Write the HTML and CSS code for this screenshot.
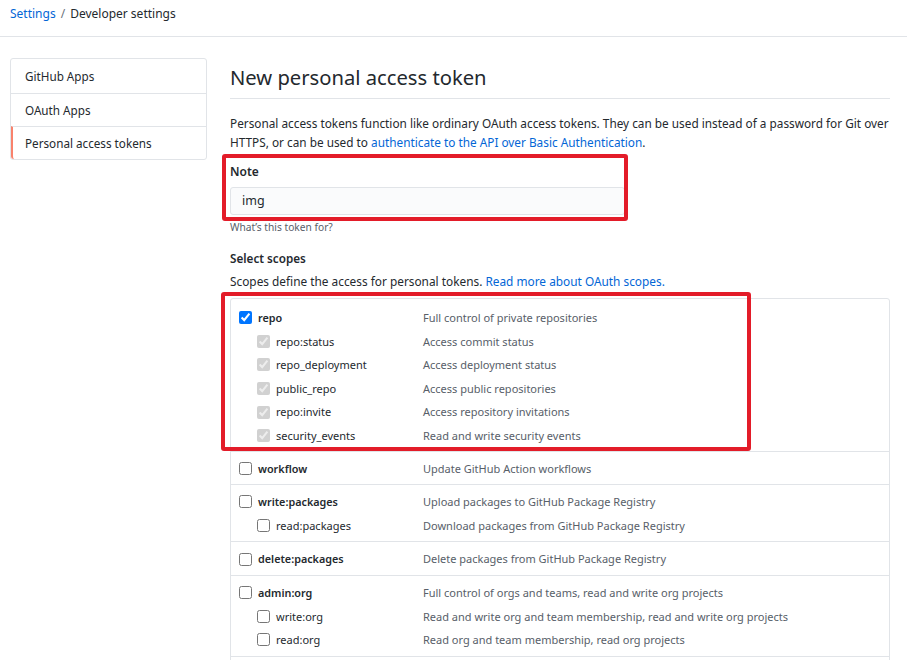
FILE: index.html
```html
<!DOCTYPE html>
<html>
<head>
<meta charset="utf-8">
<link rel="stylesheet" href="styles.css">
</head>
<body>
<div class="crumbs"><a class="link" href="#">Settings</a><span class="sep">/</span><span class="cur">Developer settings</span></div>
<div class="layout">
  <nav class="menu">
    <a class="menu-item" href="#">GitHub Apps</a>
    <a class="menu-item" href="#">OAuth Apps</a>
    <a class="menu-item selected" href="#">Personal access tokens</a>
  </nav>
  <main class="main">
    <div class="subhead"><h2>New personal access token</h2></div>
    <p class="intro">Personal access tokens function like ordinary OAuth access tokens. They can be used instead of a password for Git over HTTPS, or can be used to <a class="link" href="#">authenticate to the API over Basic Authentication</a>.</p>
    <div class="note-group">
      <label class="label">Note</label>
      <div class="input">img</div>
      <div class="mark mark-note"></div>
    </div>
    <div class="hint">What’s this token for?</div>
    <div class="label scopes-title">Select scopes</div>
    <p class="scopes-desc">Scopes define the access for personal tokens. <a class="link" href="#">Read more about OAuth scopes.</a></p>
    <div class="scopes">
      <div class="group">
        <div class="row"><span class="name top"><input type="checkbox" checked>repo</span><span class="desc">Full control of private repositories</span></div>
        <div class="row"><span class="name sub"><input type="checkbox" checked disabled>repo:status</span><span class="desc">Access commit status</span></div>
        <div class="row"><span class="name sub"><input type="checkbox" checked disabled>repo_deployment</span><span class="desc">Access deployment status</span></div>
        <div class="row"><span class="name sub"><input type="checkbox" checked disabled>public_repo</span><span class="desc">Access public repositories</span></div>
        <div class="row"><span class="name sub"><input type="checkbox" checked disabled>repo:invite</span><span class="desc">Access repository invitations</span></div>
        <div class="row"><span class="name sub"><input type="checkbox" checked disabled>security_events</span><span class="desc">Read and write security events</span></div>
      </div>
      <div class="group">
        <div class="row"><span class="name top"><input type="checkbox">workflow</span><span class="desc">Update GitHub Action workflows</span></div>
      </div>
      <div class="group">
        <div class="row"><span class="name top"><input type="checkbox">write:packages</span><span class="desc">Upload packages to GitHub Package Registry</span></div>
        <div class="row"><span class="name sub"><input type="checkbox">read:packages</span><span class="desc">Download packages from GitHub Package Registry</span></div>
      </div>
      <div class="group">
        <div class="row"><span class="name top"><input type="checkbox">delete:packages</span><span class="desc">Delete packages from GitHub Package Registry</span></div>
      </div>
      <div class="group">
        <div class="row"><span class="name top"><input type="checkbox">admin:org</span><span class="desc">Full control of orgs and teams, read and write org projects</span></div>
        <div class="row"><span class="name sub"><input type="checkbox">write:org</span><span class="desc">Read and write org and team membership, read and write org projects</span></div>
        <div class="row"><span class="name sub"><input type="checkbox">read:org</span><span class="desc">Read org and team membership, read org projects</span></div>
      </div>
      <div class="group">
        <div class="row"><span class="name top"><input type="checkbox">admin:public_key</span><span class="desc">Full control of user public keys</span></div>
      </div>
      <div class="mark mark-scopes"></div>
    </div>
  </main>
</div>
</body>
</html>
```

FILE: styles.css
```css
html, body {
  margin: 0;
  padding: 0;
  background: #fff;
  overflow: hidden;
}
body {
  font-family: "Noto Sans", "Open Sans", sans-serif;
  font-size: 12px;
  color: #24292e;
  height: 660px;
}
a { text-decoration: none; }
.link { color: #0366d6; }

.crumbs {
  height: 37px;
  box-sizing: border-box;
  padding: 3px 0 0 10px;
  border-bottom: 1px solid #e1e4e8;
  font-size: 12px;
  line-height: 22px;
}
.crumbs .sep { color: #6a737d; margin: 0 5px; }
.crumbs .cur { color: #24292e; }

.layout {
  display: flex;
  padding: 21px 17px 0 10px;
  gap: 23px;
}
.menu {
  flex: 0 0 197px;
  align-self: flex-start;
  border: 1px solid #e1e4e8;
  border-radius: 3px;
  box-sizing: border-box;
}
.menu-item {
  display: block;
  height: 33px;
  line-height: 33px;
  padding-left: 14px;
  color: #24292e;
  font-size: 11.7px;
  border-top: 1px solid #e1e4e8;
  box-sizing: border-box;
}
.menu-item:first-child { border-top: 0; height: 34px; line-height: 35px; }
.menu-item.selected {
  border-left: 2px solid #f9826c;
  padding-left: 12px;
  border-bottom-left-radius: 3px;
}

.main {
  flex: 0 0 660px;
  width: 660px;
}
.subhead {
  padding: 4px 0 6px;
  border-bottom: 1px solid #e1e4e8;
}
.subhead h2 {
  margin: 0;
  font-size: 20.2px;
  font-weight: 400;
  line-height: 30px;
}
.intro {
  margin: 15px -20px 0 0;
  font-size: 11.8px;
  line-height: 18.5px;
}
.note-group {
  position: relative;
  margin-top: 12px;
}
.label {
  display: block;
  font-weight: 600;
  font-size: 12px;
  line-height: 18px;
}
.input {
  margin-top: 6px;
  height: 28px;
  width: 395px;
  box-sizing: border-box;
  border: 1px solid #e1e4e8;
  border-radius: 3px;
  background: #fafbfc;
  padding-left: 11px;
  line-height: 26px;
  font-size: 12.5px;
}
.hint {
  font-size: 10.2px;
  color: #586069;
  line-height: 16px;
  margin-top: 4px;
}
.scopes-title {
  margin-top: 14px;
  font-size: 11.7px;
}
.scopes-desc {
  margin: 5px 0 0;
  font-size: 11.85px;
  line-height: 18px;
}
.scopes {
  position: relative;
  margin-top: 8px;
  border: 1px solid #e1e4e8;
  border-radius: 3px;
  font-size: 11px;
}
.group {
  padding: 5px 0 4px 8px;
  border-top: 1px solid #e1e4e8;
}
.group:first-child { border-top: 0; padding-top: 7px; padding-bottom: 3px; }
.row {
  display: flex;
  height: 23.6px;
  line-height: 23.6px;
}
.name {
  display: flex;
  align-items: center;
  flex: 0 0 184px;
  box-sizing: border-box;
}
.name.top { font-weight: 600; font-size: 10.8px; }
.name.sub { padding-left: 18px; }
.name input {
  width: 13px;
  height: 13px;
  margin: 0 6px 0 0;
  flex: 0 0 13px;
}
.desc { color: #586069; }

.mark {
  position: absolute;
  border: 4px solid #e31c29;
  border-radius: 3px;
  box-sizing: border-box;
  pointer-events: none;
}
.mark-note {
  left: -8px;
  top: -9px;
  width: 406px;
  height: 67px;
}
.mark-scopes {
  left: -10px;
  top: -7px;
  width: 530px;
  height: 159px;
}
```
